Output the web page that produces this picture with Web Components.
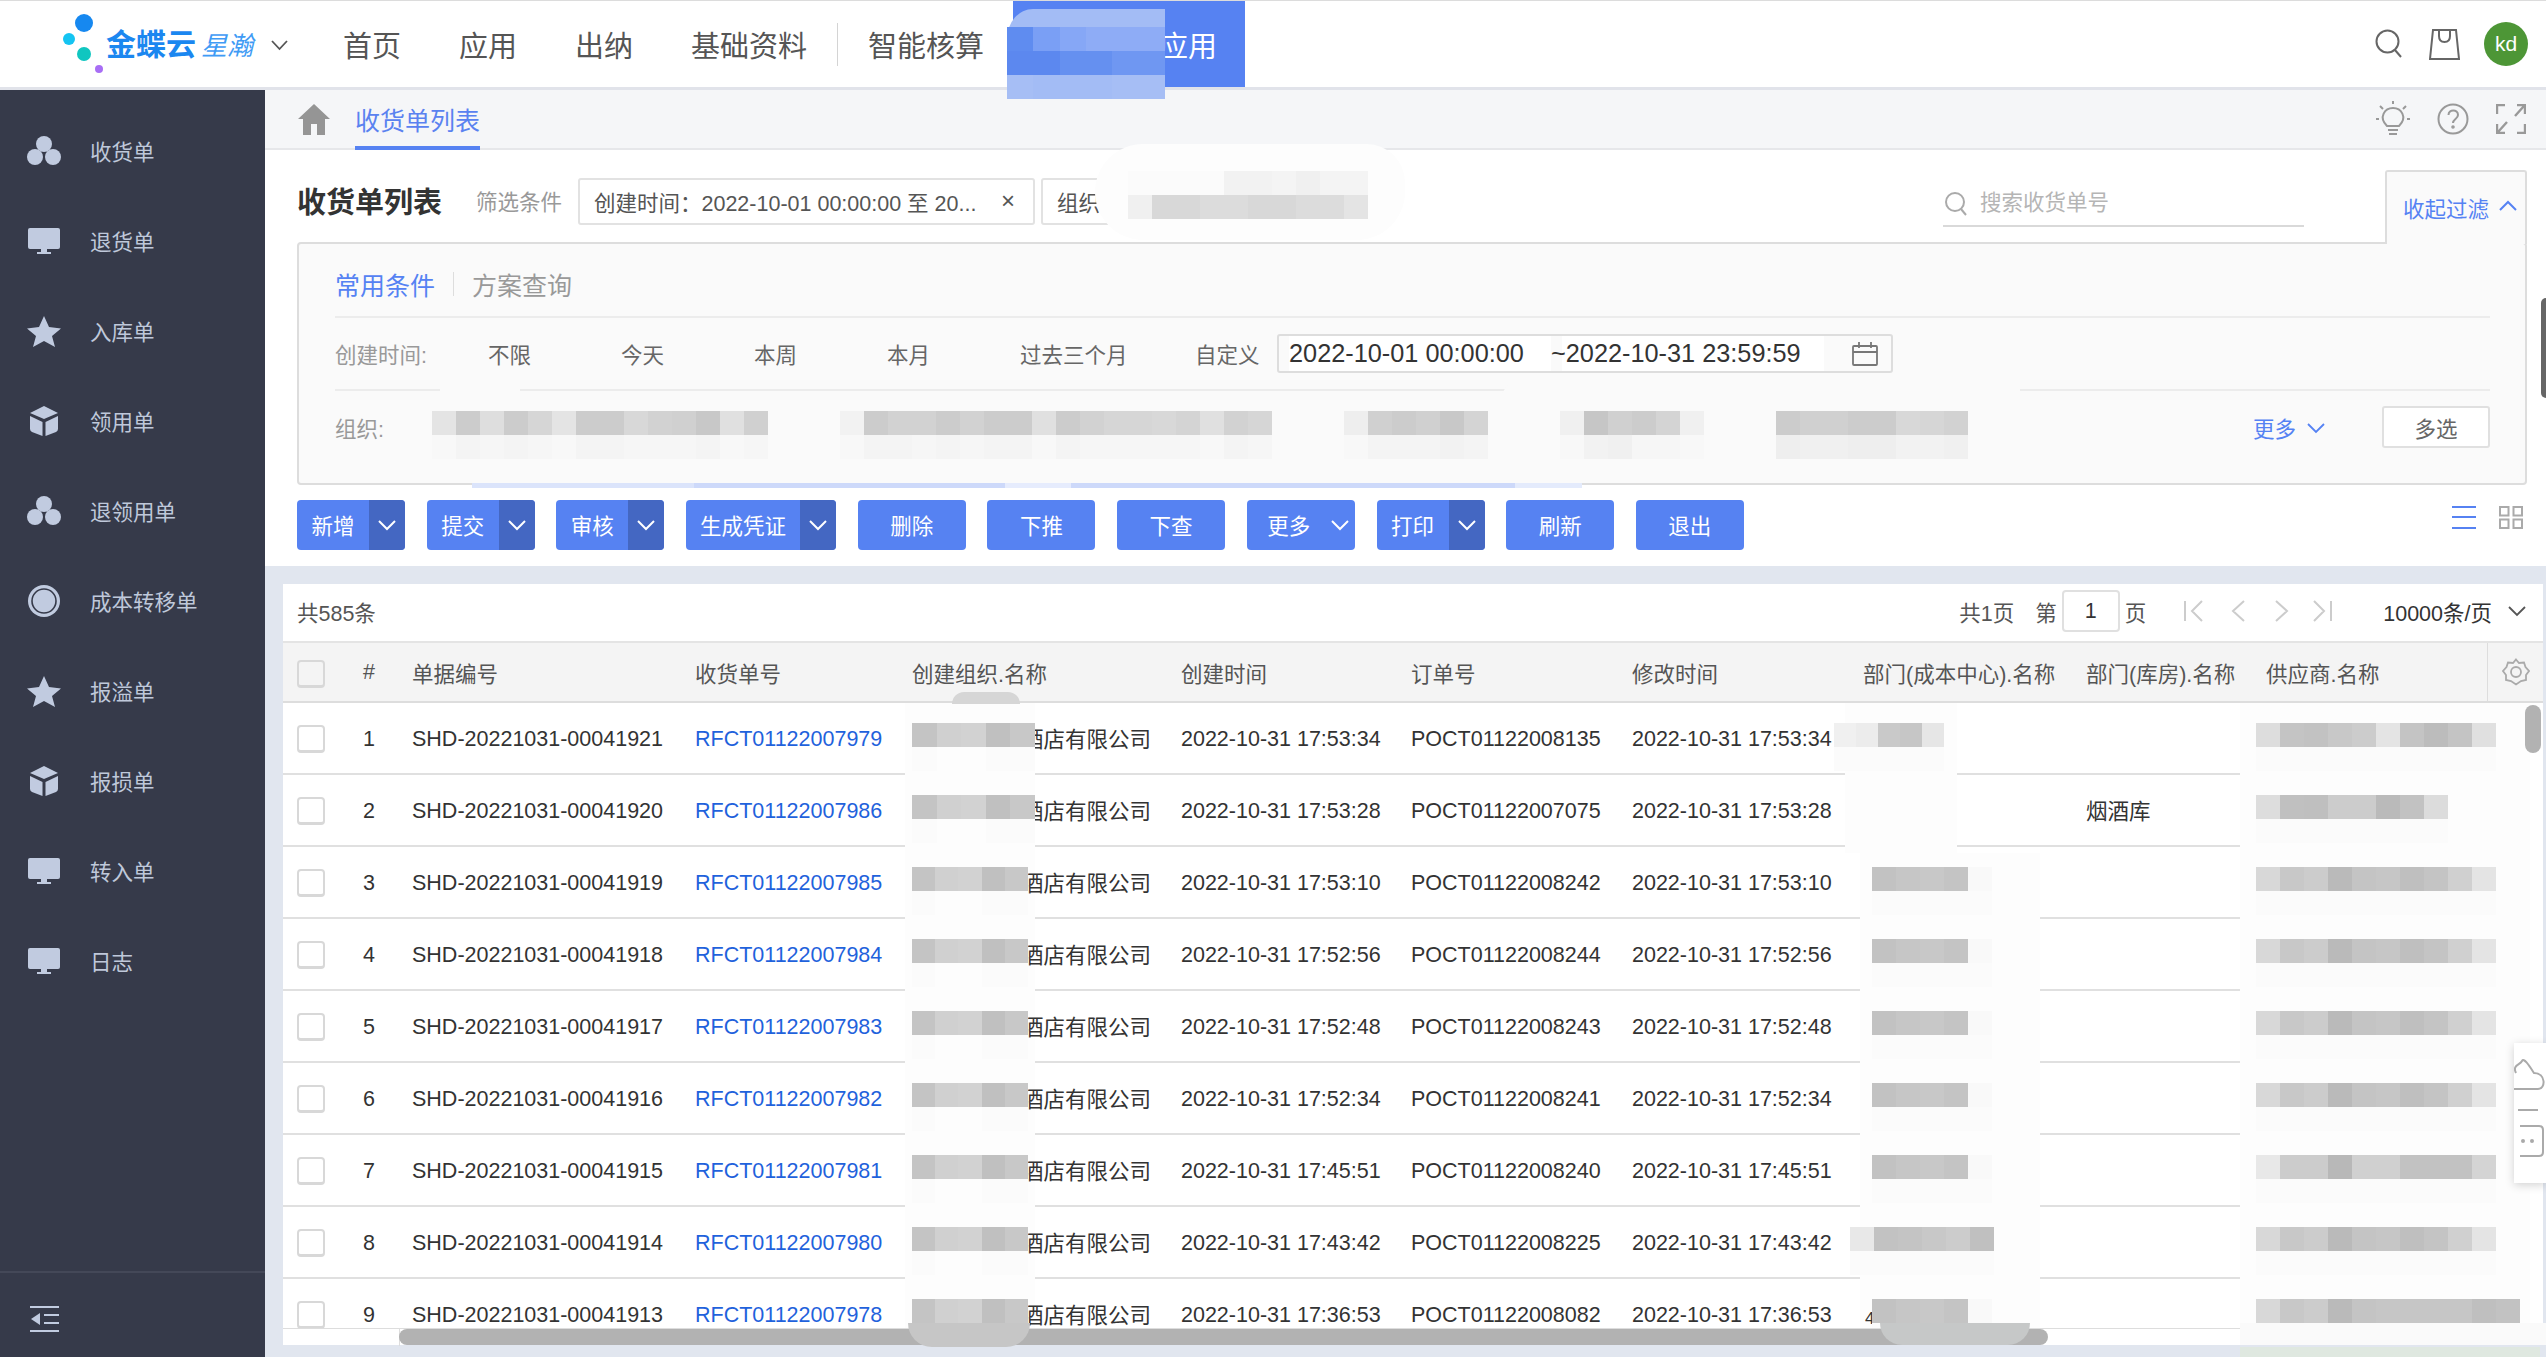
<!DOCTYPE html>
<html lang="zh">
<head>
<meta charset="utf-8">
<title>收货单列表</title>
<style>
  html, body {
    margin: 0;
    width: 2546px;
    height: 1357px;
    overflow: hidden;
    font-family: "Liberation Sans", "Noto Sans CJK SC", sans-serif;
    font-size: 21.5px;
    color: #333;
  }
</style>
</head>
<body>
<app-shell></app-shell>
<script>
const SIDE_ICONS = {
  dots: '<circle cx="17" cy="9" r="8"/><circle cx="8" cy="22" r="8"/><circle cx="26" cy="22" r="8"/>',
  screen: '<rect x="1" y="3" width="32" height="21" rx="2"/><rect x="14" y="24" width="6" height="3"/><rect x="10" y="27" width="14" height="2"/>',
  star: '<polygon points="17,1 22,12 34,13.500 25,21 28,32 17,26 6,32 9,21 0,13.500 12,12"/>',
  cube: '<path d="M17 1 L31 8 L17 14 L3 8 Z"/><path d="M3 11 L15.500 17 L15.500 31 L5 27 Q3 26 3 24 Z"/><path d="M31 11 L18.500 17 L18.500 31 L29 27 Q31 26 31 24 Z"/>',
  ring: '<circle cx="17" cy="16" r="16"/><circle cx="17" cy="16" r="12" fill="none" stroke="#363a4a" stroke-width="1.600"/>'
};

// greyscale mosaic left by the screenshot's redaction
class MosaicPatch extends HTMLElement {
  connectedCallback() {
    const w = this.getAttribute("w") || 24;
    const h = this.getAttribute("h") || 24;
    const rows = this.getAttribute("rows").split("|").map((row) => {
      const cells = row.split(",").map((c) => `<i style="width:${w}px;background:${c.length === 2 ? "#" + c + c + c : c}"></i>`);
      return `<div style="height:${h}px">${cells.join("")}</div>`;
    });
    this.attachShadow({ mode: "open" });
    this.shadowRoot.innerHTML = `
      <style>
        :host { position: absolute; display: block; z-index: 3; }
        div { display: flex; }
        i { display: block; }
      </style>
      ${rows.join("")}
    `;
  }
}

class AppHeader extends HTMLElement {
  constructor() {
    super();
    this.attachShadow({ mode: "open" });
  }

  connectedCallback() {
    this.shadowRoot.innerHTML = `
      <style>
        :host {
          display: flex;
          position: relative;
          z-index: 5;
          height: 90px;
          box-sizing: border-box;
          background: #fff;
          border-top: 1px solid #dcdcdc;
          border-bottom: 3px solid #e1e3ea;
          align-items: stretch;
        }
        .logo { display: flex; align-items: center; width: 343px; position: relative; flex: none; }
        .logo svg.dots { position: absolute; left: 60px; top: 9px; }
        .brand { margin-left: 106px; font-size: 30px; font-weight: bold; color: #1b87f0; white-space: nowrap; position: relative; top: -2px; }
        .sub { margin-left: 5px; font-size: 26px; font-weight: normal; font-style: italic; color: #3f9bf5; }
        .chev { position: absolute; left: 271px; top: 39px; }
        nav { display: flex; align-items: center; gap: 58px; font-size: 29px; color: #555; white-space: nowrap; }
        .sep { width: 1px; height: 43px; background: #d4d4d4; margin: 0 -28px 0 -28px; }
        .apps {
          position: absolute;
          left: 1013px;
          top: 0;
          width: 232px;
          height: 86px;
          background: #5682f2;
          color: #fff;
          font-size: 29px;
          display: flex;
          align-items: center;
          justify-content: flex-end;
          padding-right: 28px;
          box-sizing: border-box;
        }
        .tools { margin-left: auto; display: flex; align-items: center; }
        .avatar {
          width: 44px;
          height: 44px;
          border-radius: 50%;
          background: #4d9636;
          color: #fff;
          font-size: 21px;
          display: flex;
          align-items: center;
          justify-content: center;
          margin: 0 18px 0 24px;
        }
        .blob { position: absolute; left: 1007px; top: 8px; width: 158px; height: 90px; border-radius: 26px 0 40px 40px / 30px 0 30px 30px; background: #a3bcf5; overflow: hidden; }
      </style>
      <div class="logo">
        <svg class="dots" width="50" height="68" viewBox="0 0 50 68">
          <circle cx="24" cy="13" r="9" fill="#1688f0"/>
          <circle cx="9" cy="29" r="6" fill="#14c4f2"/>
          <circle cx="24" cy="44" r="7" fill="#10c6c0"/>
          <circle cx="39" cy="59" r="4" fill="#a86ef5"/>
        </svg>
        <span class="brand">金蝶云<span class="sub">星瀚</span></span>
        <svg class="chev" width="17" height="11" viewBox="0 0 17 11"><path d="M1 1 L8.500 9 L16 1" fill="none" stroke="#555" stroke-width="1.800"/></svg>
      </div>
      <nav>
        <span>首页</span><span>应用</span><span>出纳</span><span>基础资料</span>
        <span class="sep"></span>
        <span>智能核算</span>
      </nav>
      <div class="apps">应用</div>
      <div class="blob"></div>
      <mosaic-patch style="left:1007px;top:26px" w="26.300" rows="#5f8cf0,#7a9ff5,#86a7f6,#8eacf6,#8eacf6,#8eacf6|#5c88ef,#5c88ef,#6590f0,#6590f0,#6f97f2,#6f97f2|#a6bef5,#a3bcf5,#a3bcf5,#a3bcf5,#a6bef5,#a6bef5"></mosaic-patch>
      <div class="tools">
        <svg width="28" height="30" viewBox="0 0 28 30" style="margin-right:26px;margin-left:2px"><circle cx="12.500" cy="12.500" r="11" fill="none" stroke="#666" stroke-width="2"/><path d="M20 21 L26 28" stroke="#666" stroke-width="2"/></svg>
        <svg width="31" height="32" viewBox="0 0 31 32"><path d="M4 2 H27 L30 31 H1 Z" fill="none" stroke="#666" stroke-width="2"/><path d="M10 3 V8 Q10 14 15.500 14 Q21 14 21 8 V3" fill="none" stroke="#666" stroke-width="2"/></svg>
        <div class="avatar">kd</div>
      </div>
    `;
  }
}

class SideItem extends HTMLElement {
  constructor() {
    super();
    this.attachShadow({ mode: "open" });
  }

  connectedCallback() {
    const icon = SIDE_ICONS[this.getAttribute("icon")];
    this.shadowRoot.innerHTML = `
      <style>
        :host { display: flex; align-items: center; height: 90px; padding-left: 27px; color: #bfc8da; font-size: 21.500px; }
        svg { width: 34px; height: 34px; fill: #c1cbe0; margin-right: 29px; flex: none; }
        span { position: relative; top: -2px; }
      </style>
      <svg viewBox="0 0 34 34">${icon}</svg>
      <span><slot></slot></span>
    `;
  }
}

class AppSidebar extends HTMLElement {
  constructor() {
    super();
    this.attachShadow({ mode: "open" });
  }

  connectedCallback() {
    this.shadowRoot.innerHTML = `
      <style>
        :host { display: flex; flex-direction: column; background: #363a4a; padding-top: 17px; box-sizing: border-box; }
        footer { margin-top: auto; height: 86px; border-top: 2px solid #444858; box-sizing: border-box; padding: 33px 0 0 30px; }
      </style>
      <side-item icon="dots">收货单</side-item>
      <side-item icon="screen">退货单</side-item>
      <side-item icon="star">入库单</side-item>
      <side-item icon="cube">领用单</side-item>
      <side-item icon="dots">退领用单</side-item>
      <side-item icon="ring">成本转移单</side-item>
      <side-item icon="star">报溢单</side-item>
      <side-item icon="cube">报损单</side-item>
      <side-item icon="screen">转入单</side-item>
      <side-item icon="screen">日志</side-item>
      <footer>
        <svg width="30" height="26" viewBox="0 0 30 26" fill="#c1cbe0">
          <rect y="0" width="29" height="2"/><rect y="24" width="29" height="2"/>
          <rect x="14" y="8" width="15" height="2"/><rect x="14" y="16" width="15" height="2"/>
          <polygon points="10,7 10,19 1,13"/>
        </svg>
      </footer>
    `;
  }
}

class PageTabs extends HTMLElement {
  constructor() {
    super();
    this.attachShadow({ mode: "open" });
  }

  connectedCallback() {
    this.shadowRoot.innerHTML = `
      <style>
        :host { display: flex; align-items: center; height: 60px; box-sizing: border-box; background: #f5f6f8; border-bottom: 2px solid #e6e7ea; padding-left: 33px; position: relative; }
        .tab { margin-left: 25px; color: #5a82f0; font-size: 25px; line-height: 60px; border-bottom: 4px solid #5682f2; position: relative; top: 1px; height: 55px; }
        .tools { margin-left: auto; display: flex; align-items: center; gap: 27px; padding-right: 20px; }
        svg { display: block; }
      </style>
      <svg width="32" height="31" viewBox="0 0 32 31" fill="#959595"><path d="M16 0 L32 15 H27 V31 H19 V20 H13 V31 H5 V15 H0 Z"/></svg>
      <div class="tab">收货单列表</div>
      <div class="tools">
        <svg width="34" height="36" viewBox="0 0 34 36" fill="none" stroke="#999" stroke-width="2"><path d="M11 25 C2 16 9 7 17 7 C25 7 32 16 23 25 Z"/><path d="M12 29 H22 M13 33 H21" /><path d="M17 0 V3 M4 5 L7 8 M30 5 L27 8 M0 18 H3 M31 18 H34"/></svg>
        <svg width="32" height="32" viewBox="0 0 32 32" fill="none" stroke="#999" stroke-width="2"><circle cx="16" cy="16" r="14.500"/><path d="M11.500 12 C11.500 6 21 6 21 12 C21 16 16 16 16 20"/><circle cx="16" cy="24" r=".8"/></svg>
        <svg width="30" height="30" viewBox="0 0 30 30" fill="none" stroke="#999" stroke-width="2.400"><path d="M1 10 V1 H9 M21 1 H29 V10 M1 20 V29 H9 M21 29 H29 V20 M28 2 L19 12 M2 28 L11 18"/></svg>
      </div>
    `;
  }
}

class ListHead extends HTMLElement {
  constructor() {
    super();
    this.attachShadow({ mode: "open" });
  }

  connectedCallback() {
    this.shadowRoot.innerHTML = `
      <style>
        :host { display: flex; align-items: center; height: 92px; box-sizing: border-box; padding: 10px 19px 0 32px; position: relative; white-space: nowrap; }
        h1 { font-size: 29px; font-weight: bold; margin: 0; color: #333; width: 179px; position: relative; top: -1px; }
        .hint { color: #999; width: 102px; position: relative; top: -1px; }
        .chip { display: flex; align-items: center; height: 47px; box-sizing: border-box; border: 2px solid #e2e2e2; border-radius: 3px; padding: 0 18px 0 14px; color: #555; width: 457px; }
        .chip b { margin-left: auto; font-weight: normal; font-size: 24px; }
        .chip.two { width: 340px; margin-left: 6px; }
        .find { position: absolute; left: 1678px; top: 38px; width: 361px; height: 39px; box-sizing: border-box; border-bottom: 2px solid #d9d9d9; display: flex; align-items: flex-start; color: #b5b5b5; }
        .find span { position: relative; top: -3px; }
        .find svg { margin: 3px 11px 0 2px; }
        .fold { position: absolute; right: 19px; top: 20px; width: 142px; height: 74px; box-sizing: border-box; background: #fafafa; border: 2px solid #ddd; border-bottom: none; border-radius: 3px 3px 0 0; color: #5582f3; padding: 20px 0 0 16px; display: flex; align-items: flex-start; z-index: 2; }
        .fold svg { margin: 8px 0 0 10px; }
        .smudge { position: absolute; left: 830px; top: -6px; width: 310px; height: 96px; background: #fdfdfd; border-radius: 50px 40px 50px 50px; }
      </style>
      <h1>收货单列表</h1>
      <span class="hint">筛选条件</span>
      <div class="chip">创建时间：2022-10-01 00:00:00 至 20...<b>×</b></div>
      <div class="chip two">组织</div>
      <div class="smudge"></div>
      <mosaic-patch style="left:863px;top:21px" rows="fb,fb,fb,fb,f2,f2,f4,f0,f4,f4|f0,d8,d8,dc,dc,d8,d8,dc,dc,e4"></mosaic-patch>
      <div class="find">
        <svg width="24" height="26" viewBox="0 0 24 26" fill="none" stroke="#aaa" stroke-width="2"><circle cx="10" cy="11" r="9"/><path d="M16 18 L21 24"/></svg>
        <span>搜索收货单号</span>
      </div>
      <div class="fold">收起过滤
        <svg width="18" height="11" viewBox="0 0 18 11"><path d="M1 10 L9 2 L17 10" fill="none" stroke="#5582f3" stroke-width="2"/></svg>
      </div>
    `;
  }
}

class FilterPanel extends HTMLElement {
  constructor() {
    super();
    this.attachShadow({ mode: "open" });
  }

  connectedCallback() {
    this.shadowRoot.innerHTML = `
      <style>
        :host { display: block; position: relative; margin: 0 19px 0 32px; height: 243px; box-sizing: border-box; background: #fafafa; border: 2px solid #ddd; border-radius: 4px; padding: 0 35px 0 36px; white-space: nowrap; }
        .tabs { display: flex; align-items: center; height: 74px; padding-top: 8px; border-bottom: 2px solid #ececec; box-sizing: border-box; font-size: 25px; color: #999; }
        .tabs b { font-weight: normal; color: #5582f3; }
        .tabs i { width: 1px; height: 24px; background: #ddd; margin: 0 18px; }
        .row { display: flex; align-items: center; position: relative; box-sizing: border-box; }
        .when { height: 73px; border-bottom: 2px solid #ececec; color: #666; }
        .label { width: 153px; color: #999; flex: none; }
        .opt { width: 133px; flex: none; }
        .opt.w { width: 175px; }
        .opt.c { width: 82px; }
        .date { display: flex; align-items: center; width: 616px; height: 39px; box-sizing: border-box; background: #fafafa; border: 2px solid #ddd; border-radius: 3px; font-size: 25.300px; color: #333; padding-left: 10px; position: relative; }
        .date span { background: #fff; height: 35px; line-height: 35px; }
        .date .a { width: 262px; }
        .date .b { width: 273px; background: linear-gradient(90deg, #fafafa 11px, #fff 11px); }
        .date svg { position: absolute; left: 573px; top: 6px; }
        .org { height: 72px; }
        .more { margin-left: auto; color: #5582f3; display: flex; align-items: center; }
        .more svg { margin: 2px 57px 0 11px; }
        .multi { width: 108px; height: 42px; box-sizing: border-box; background: #fff; border: 2px solid #e0e0e0; border-radius: 3px; color: #666; display: flex; align-items: center; justify-content: center; }
        .smudge { position: absolute; background: #fafafa; }
        .strip { position: absolute; left: 173px; top: 239px; height: 5px; width: 1110px; z-index: 3; background: linear-gradient(90deg, #dbe4fb 0 20%, #cdd9fa 20% 48%, #e6ecfd 48% 54%, #cdd9fa 54% 94%, #e4ebfc 94%); }
      </style>
      <div class="tabs"><b>常用条件</b><i></i><span>方案查询</span></div>
      <div class="row when">
        <span class="label">创建时间:</span>
        <span class="opt">不限</span><span class="opt">今天</span><span class="opt">本周</span><span class="opt">本月</span>
        <span class="opt w">过去三个月</span><span class="opt c">自定义</span>
        <div class="date">
          <span class="a">2022-10-01 00:00:00</span><span class="b">~2022-10-31 23:59:59</span>
          <svg width="26" height="24" viewBox="0 0 26 24" fill="none" stroke="#777" stroke-width="1.800"><rect x="1" y="4" width="24" height="19" rx="1"/><path d="M1 10 H25 M7 0 V6 M19 0 V6"/></svg>
        </div>
      </div>
      <div class="row org">
        <span class="label">组织:</span>
        <div class="smudge" style="left:105px;top:-4px;width:80px;height:10px"></div>
        <div class="smudge" style="left:1165px;top:-16px;width:520px;height:30px;border-radius:30px 0 0 0"></div>
        <mosaic-patch style="left:97px;top:20px" rows="e4,cc,de,cc,d6,e4,cc,cc,d8,d2,d0,c8,e0,d0|f8,f4,f6,f4,f6,f8,f4,f4,f6,f6,f6,f4,f8,f6"></mosaic-patch>
        <mosaic-patch style="left:505px;top:20px" rows="f2,cc,d2,d2,cc,d2,cc,cc,e0,cc,d2,d6,d6,d8,d4,e0,d2,d6|f8,f4,f4,f6,f4,f6,f4,f4,f8,f4,f6,f6,f6,f6,f6,f8,f4,f6"></mosaic-patch>
        <mosaic-patch style="left:1009px;top:20px" rows="ee,d0,cc,d0,c8,d4|f8,f4,f4,f4,f2,f4"></mosaic-patch>
        <mosaic-patch style="left:1225px;top:20px" rows="f0,c6,d0,cc,d4,f0|f8,f2,f0,f6,f6,f8"></mosaic-patch>
        <mosaic-patch style="left:1441px;top:20px" rows="cc,d0,d0,cc,cc,d8,d6,d2|ee,f0,f0,ee,ee,f2,f2,f0"></mosaic-patch>
        <span class="more">更多<svg width="18" height="11" viewBox="0 0 18 11"><path d="M1 1 L9 9 L17 1" fill="none" stroke="#5582f3" stroke-width="1.800"/></svg></span>
        <div class="multi">多选</div>
      </div>
      <div class="strip"></div>
    `;
  }
}

class ActionBtn extends HTMLElement {
  constructor() {
    super();
    this.attachShadow({ mode: "open" });
  }

  connectedCallback() {
    const arrow = this.getAttribute("arrow");
    const chev = '<svg width="18" height="11" viewBox="0 0 18 11"><path d="M1 1 L9 9 L17 1" fill="none" stroke="#fff" stroke-width="2"/></svg>';
    const width = this.getAttribute("width");
    let tail = "";
    if (arrow === "split") tail = `<span class="drop" style="width:${this.getAttribute("drop") || 36}px">${chev}</span>`;
    if (arrow === "plain") tail = `<span class="plain">${chev}</span>`;
    this.shadowRoot.innerHTML = `
      <style>
        :host { display: flex; width: ${width}px; height: 50px; border-radius: 4px; background: #5682f2; color: #fff; overflow: hidden; flex: none; }
        .label { flex: 1; display: flex; align-items: center; justify-content: center; position: relative; top: -1px; }
        .drop { display: flex; align-items: center; justify-content: center; background: #4467c2; flex: none; }
        .plain { display: flex; align-items: center; padding-right: 6px; }
      </style>
      <span class="label"><slot></slot></span>${tail}
    `;
  }
}

class ActionToolbar extends HTMLElement {
  constructor() {
    super();
    this.attachShadow({ mode: "open" });
  }

  connectedCallback() {
    this.shadowRoot.innerHTML = `
      <style>
        :host { display: flex; align-items: center; margin-top: 15px; padding: 0 23px 0 32px; height: 50px; gap: 21.700px; }
        .views { margin-left: auto; display: flex; gap: 23px; margin-bottom: 16px; }
        svg { display: block; }
      </style>
      <action-btn width="108" arrow="split">新增</action-btn>
      <action-btn width="108" arrow="split">提交</action-btn>
      <action-btn width="108" arrow="split">审核</action-btn>
      <action-btn width="150" arrow="split">生成凭证</action-btn>
      <action-btn width="108">删除</action-btn>
      <action-btn width="108">下推</action-btn>
      <action-btn width="108">下查</action-btn>
      <action-btn width="108" arrow="plain">更多</action-btn>
      <action-btn width="108" arrow="split">打印</action-btn>
      <action-btn width="108">刷新</action-btn>
      <action-btn width="108">退出</action-btn>
      <div class="views">
        <svg width="24" height="23" viewBox="0 0 24 23" fill="#5682f2"><rect width="24" height="2"/><rect y="10" width="24" height="2"/><rect y="21" width="24" height="2"/></svg>
        <svg width="24" height="23" viewBox="0 0 24 23" fill="none" stroke="#aaa" stroke-width="2"><rect x="1" y="1" width="8.500" height="8.500"/><rect x="14.500" y="1" width="8.500" height="8.500"/><rect x="1" y="13.500" width="8.500" height="8.500"/><rect x="14.500" y="13.500" width="8.500" height="8.500"/></svg>
      </div>
    `;
  }
}

const COLUMNS = "62px 48px 302px 217px 269px 230px 221px 231px 223px 180px 1fr";

class CheckBox extends HTMLElement {
  constructor() {
    super();
    this.attachShadow({ mode: "open" });
    this.shadowRoot.innerHTML = `
      <style>
        :host { display: block; width: 28px; height: 28px; box-sizing: border-box; border: 2px solid #d8d8d8; border-bottom-width: 3px; border-radius: 4px; background: var(--box-bg, #fff); margin-left: 14px; margin-top: var(--box-top, 0); }
      </style>
    `;
  }
}

class DataRow extends HTMLElement {
  constructor() {
    super();
    this.attachShadow({ mode: "open" });
  }

  connectedCallback() {
    const d = this.data;
    const dept = d.dept
      ? `<mosaic-patch style="left:${d.dept.left}px;top:19px" w="${d.dept.w}" rows="${d.dept.top}|${d.dept.top.split(",").map(() => "fb").join(",")}"></mosaic-patch>`
      : "";
    const sup = `<mosaic-patch style="left:-10px;top:19px" rows="${d.sup}|${d.sup.split(",").map(() => "fb").join(",")}"></mosaic-patch>`;
    this.shadowRoot.innerHTML = `
      <style>
        :host { display: grid; grid-template-columns: ${COLUMNS}; height: 72px; box-sizing: border-box; border-bottom: 2px solid #e0e0e0; align-items: center; white-space: nowrap; color: #333; margin-right: 19px; }
        div { position: relative; top: 1px; height: 70px; display: flex; align-items: center; z-index: 2; }
        .idx { justify-content: center; }
        .code { padding-left: 19px; }
        a { color: #1f62dc; text-decoration: none; }
        .org span { position: absolute; left: 110px; margin-top: -3px; }
        .store { position: relative; top: -2px; }
        .clip { position: absolute; left: 2px; top: 30px; font-size: 17px; line-height: 17px; }
      </style>
      <div><check-box></check-box></div>
      <div class="idx">${d.n}</div>
      <div class="code">${d.code}</div>
      <div><a>${d.link}</a></div>
      <div class="org"><span>酒店有限公司</span><mosaic-patch style="left:0;top:19px" w="${d.n < 3 ? 24.600 : 23.200}" rows="c4,d0,d2,c0,c8|fb,fd,fd,fb,fb"></mosaic-patch></div>
      <div>2022-10-31 ${d.time}</div>
      <div>${d.order}</div>
      <div>2022-10-31 ${d.time}</div>
      <div>${d.frag ? `<span class="clip">${d.frag}</span>` : ""}${dept}</div>
      <div>${d.store ? `<span class="store">${d.store}</span>` : ""}</div>
      <div>${sup}</div>
    `;
  }
}

class DataTable extends HTMLElement {
  constructor() {
    super();
    this.attachShadow({ mode: "open" });
  }

  connectedCallback() {
    const regular = { left: 9, w: 24, top: "c2,c6,c8,c4,f9" };
    const supplier = "d8,c8,cc,ba,c4,c6,bf,c4,d0,e4";
    const rows = [
      ["SHD-20221031-00041921", "RFCT01122007979", "17:53:34", "POCT01122008135", { dept: { left: -29, w: 22, top: "f0,ec,c9,c6,e6" }, sup: "dd,c4,c2,c8,cc,e4,c4,bc,c4,e0" }],
      ["SHD-20221031-00041920", "RFCT01122007986", "17:53:28", "POCT01122007075", { store: "烟酒库", sup: "dd,c0,bf,cc,cc,ba,c2,dc" }],
      ["SHD-20221031-00041919", "RFCT01122007985", "17:53:10", "POCT01122008242", {}],
      ["SHD-20221031-00041918", "RFCT01122007984", "17:52:56", "POCT01122008244", {}],
      ["SHD-20221031-00041917", "RFCT01122007983", "17:52:48", "POCT01122008243", {}],
      ["SHD-20221031-00041916", "RFCT01122007982", "17:52:34", "POCT01122008241", {}],
      ["SHD-20221031-00041915", "RFCT01122007981", "17:45:51", "POCT01122008240", { sup: "e8,cc,cc,b8,d0,d0,c2,c2,c2,d4" }],
      ["SHD-20221031-00041914", "RFCT01122007980", "17:43:42", "POCT01122008225", { dept: { left: -13, w: 24, top: "e8,c2,c4,c8,cc,c0" } }],
      ["SHD-20221031-00041913", "RFCT01122007978", "17:36:53", "POCT01122008082", { frag: "4", sup: "d8,c8,cc,ba,c4,c6,c6,c6,c6,bf,c2" }]
    ];
    this.shadowRoot.innerHTML = `
      <style>
        :host { display: block; position: relative; margin: 0 3px 0 18px; height: 761px; background: #fff; white-space: nowrap; }
        .pager { display: flex; align-items: center; height: 57px; box-sizing: border-box; padding: 0 17px 3px 14px; color: #555; }
        .pager .page { margin-left: auto; display: flex; align-items: center; }
        .pager .box { width: 58px; height: 42px; box-sizing: border-box; border: 2px solid #e0e0e0; border-radius: 4px; color: #333; display: flex; align-items: center; justify-content: center; margin: 0 5px; }
        .pager .arrows { display: flex; align-items: center; margin: 0 51px 0 38px; }
        .pager .size { color: #333; }
        .head { display: grid; grid-template-columns: ${COLUMNS}; height: 62px; box-sizing: border-box; background: #f4f4f4; border-top: 2px solid #e4e4e4; border-bottom: 2px solid #ddd; align-items: center; color: #555; position: relative; --box-bg: #f4f4f4; --box-top: 3px; }
        .head .idx { text-align: center; }
        .head .code { padding-left: 19px; }
        .gear { position: absolute; right: 0; top: 0; width: 55px; height: 58px; border-left: 1px solid #ddd; display: flex; align-items: center; justify-content: center; }
        .body { position: relative; height: 625px; overflow: hidden; }
        .smudge { position: absolute; top: 0; bottom: 0; background: #fdfdfd; z-index: 1; }
        .vbar { position: absolute; right: 2px; top: 2px; width: 16px; height: 48px; border-radius: 8px; background: #b2b2b2; z-index: 4; }
        .hbar { position: relative; height: 17px; border-top: 1px solid #ddd; box-sizing: border-box; }
        .hbar i { position: absolute; left: 116px; top: 0; width: 1px; height: 17px; background: #ddd; }
        .hbar b { position: absolute; left: 116px; top: 0; width: 1649px; height: 16px; border-radius: 8px; background: #b2b2b2; }
        .over { position: absolute; z-index: 4; }
      </style>
      <div class="pager">
        <span>共585条</span>
        <div class="page">
          <span>共1页</span><span style="margin-left:21px">第</span>
          <span class="box">1</span><span>页</span>
          <span class="arrows">
            <svg width="148" height="22" viewBox="0 0 148 22" fill="none" stroke="#ccc" stroke-width="2"><path d="M1 1 V21 M18 1 L8 11 L18 21 M60 1 L49 11 L60 21 M92 1 L103 11 L92 21 M130 1 L140 11 L130 21 M147 1 V21"/></svg>
          </span>
          <span class="size">10000条/页</span>
          <svg style="margin-left:16px" width="18" height="11" viewBox="0 0 18 11"><path d="M1 1 L9 9 L17 1" fill="none" stroke="#555" stroke-width="1.800"/></svg>
        </div>
      </div>
      <div class="head">
        <check-box></check-box>
        <span class="idx">#</span>
        <span class="code">单据编号</span>
        <span>收货单号</span>
        <span>创建组织.名称</span>
        <span>创建时间</span>
        <span>订单号</span>
        <span>修改时间</span>
        <span>部门(成本中心).名称</span>
        <span>部门(库房).名称</span>
        <span>供应商.名称</span>
        <div class="gear">
          <svg width="28" height="28" viewBox="0 0 28 28" fill="none" stroke="#aaa" stroke-width="1.800"><path d="M14 1.500 L17 5 L22 4.500 L23.500 9 L27 13 L24 17 L24 22 L19 23 L14 26.500 L9 23 L4 22 L4 17 L1 13 L4.500 9 L6 4.500 L11 5 Z"/><circle cx="14" cy="14" r="5"/></svg>
        </div>
      </div>
      <div class="body">
        <div class="smudge" style="left:622px;width:130px"></div>
        <div class="smudge" style="left:1562px;width:112px;bottom:auto;height:150px"></div>
        <div class="smudge" style="left:1577px;width:180px;top:150px"></div>
        <div class="smudge" style="left:1957px;width:290px"></div>
        <div class="vbar"></div>
      </div>
      <div class="hbar"><i></i><b></b></div>
      <div class="over" style="left:625px;top:739px;width:122px;height:24px;background:#c6c6c6;border-radius:0 0 30px 30px"></div>
      <div class="over" style="left:1597px;top:739px;width:150px;height:22px;background:#c6c8c8;border-radius:0 0 40px 40px"></div>
      <div class="over" style="left:1957px;top:739px;width:306px;height:22px;background:#fafafa"></div>
      <div class="over" style="left:669px;top:108px;width:68px;height:12px;background:#d6d6d6;border-radius:34px 34px 0 0"></div>
    `;
    const body = this.shadowRoot.querySelector(".body");
    rows.forEach((r, i) => {
      const extra = r[4];
      const row = document.createElement("data-row");
      row.data = {
        n: i + 1,
        code: r[0],
        link: r[1],
        time: r[2],
        order: r[3],
        store: extra.store,
        frag: extra.frag,
        dept: i === 1 ? null : extra.dept || regular,
        sup: extra.sup || supplier
      };
      body.appendChild(row);
    });
  }
}

class SideWidget extends HTMLElement {
  constructor() {
    super();
    this.attachShadow({ mode: "open" });
    this.shadowRoot.innerHTML = `
      <style>
        :host { position: absolute; right: 0; top: 1043px; width: 32px; height: 140px; background: #fff; box-shadow: 0 2px 10px rgba(0,0,0,.18); z-index: 6; display: block; }
        svg { position: absolute; left: 0; top: 0; }
      </style>
      <svg width="32" height="140" viewBox="0 0 32 140" fill="none" stroke="#aaa" stroke-width="2">
        <path d="M2 30 C-2 22 6 22 8 18 C10 14 16 24 20 30 C32 30 32 46 24 46 H0"/>
        <path d="M4 67 H24"/>
        <path d="M6 83 H25 Q29 83 29 87 V109 Q29 113 25 113 H6"/>
        <circle cx="9" cy="98" r="2" fill="#aaa" stroke="none"/><circle cx="18" cy="98" r="2" fill="#aaa" stroke="none"/>
      </svg>
    `;
  }
}

class AppShell extends HTMLElement {
  constructor() {
    super();
    this.attachShadow({ mode: "open" });
  }

  connectedCallback() {
    this.shadowRoot.innerHTML = `
      <style>
        :host { display: grid; position: relative; grid-template-columns: 265px 1fr; grid-template-rows: 90px 1fr; width: 2546px; height: 1357px; overflow: hidden; }
        app-header { grid-column: 1 / 3; }
        main { background: #e1e6ef; display: flex; flex-direction: column; min-width: 0; position: relative; }
        .sheet { background: #fff; height: 416px; }
        data-table { margin-top: 18px; }
        .edge { position: absolute; right: 0; top: 298px; width: 5px; height: 100px; background: #666; border-radius: 5px 0 0 5px; z-index: 6; }
        .foot { position: absolute; left: 2240px; top: 1347px; width: 300px; height: 10px; background: #dfe8e0; z-index: 6; }
      </style>
      <app-header></app-header>
      <app-sidebar></app-sidebar>
      <main>
        <page-tabs></page-tabs>
        <div class="sheet">
          <list-head></list-head>
          <filter-panel></filter-panel>
          <action-toolbar></action-toolbar>
        </div>
        <data-table></data-table>
      </main>
      <div class="edge"></div>
      <div class="foot"></div>
      <side-widget></side-widget>
    `;
  }
}

customElements.define("mosaic-patch", MosaicPatch);
customElements.define("app-header", AppHeader);
customElements.define("side-item", SideItem);
customElements.define("app-sidebar", AppSidebar);
customElements.define("page-tabs", PageTabs);
customElements.define("list-head", ListHead);
customElements.define("filter-panel", FilterPanel);
customElements.define("action-btn", ActionBtn);
customElements.define("action-toolbar", ActionToolbar);
customElements.define("check-box", CheckBox);
customElements.define("data-row", DataRow);
customElements.define("data-table", DataTable);
customElements.define("side-widget", SideWidget);
customElements.define("app-shell", AppShell);
</script>
</body>
</html>
